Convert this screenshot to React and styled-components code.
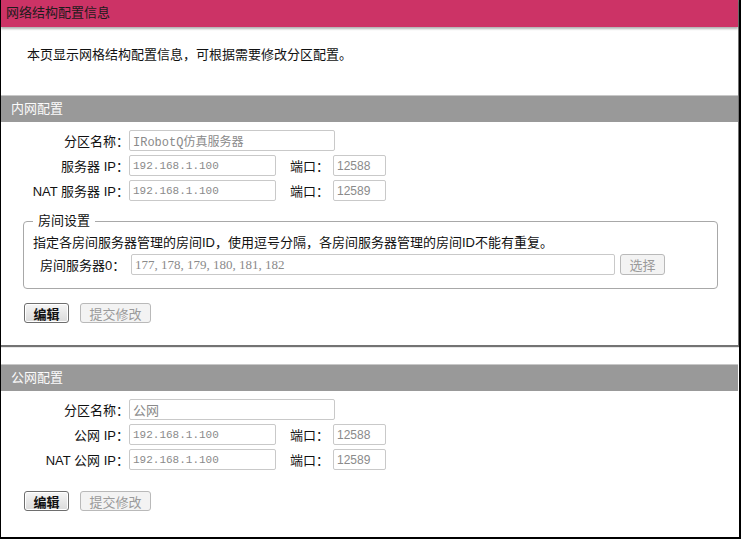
import React from 'react';
import styled, { createGlobalStyle } from 'styled-components';

const FONT = `"Liberation Sans", "Noto Sans CJK SC", sans-serif`;
const MONO = `"Liberation Mono", "Noto Sans CJK SC", monospace`;
const SERIF = `"Liberation Serif", "Noto Sans CJK SC", serif`;

const GlobalStyle = createGlobalStyle`
  html, body {
    margin: 0;
    padding: 0;
    background: #fff;
  }
  * {
    box-sizing: border-box;
  }
`;

const sections = [
  {
    title: '内网配置',
    name: 'IRobotQ仿真服务器',
    nameMono: true,
    ipLabel: '服务器 IP：',
    natLabel: 'NAT 服务器 IP：',
    ip: '192.168.1.100',
    port: '12588',
    natIp: '192.168.1.100',
    natPort: '12589',
    rooms: true,
  },
  {
    title: '公网配置',
    name: '公网',
    nameMono: false,
    ipLabel: '公网 IP：',
    natLabel: 'NAT 公网 IP：',
    ip: '192.168.1.100',
    port: '12588',
    natIp: '192.168.1.100',
    natPort: '12589',
    rooms: false,
  },
];

const App = () => {
  return (
    <Frame>
      <GlobalStyle />
      <TopPanel>
        <TitleBar>网络结构配置信息</TitleBar>
        <Intro>本页显示网格结构配置信息，可根据需要修改分区配置。</Intro>
        <ConfigSection {...sections[0]} />
      </TopPanel>
      <BottomPanel>
        <ConfigSection {...sections[1]} />
      </BottomPanel>
    </Frame>
  );
};

const ConfigSection = ({
  title,
  name,
  nameMono,
  ipLabel,
  natLabel,
  ip,
  port,
  natIp,
  natPort,
  rooms,
}) => (
  <>
    <SectionBar>{title}</SectionBar>
    <SectionBody>
      <Row>
        <Label>分区名称：</Label>
        <Field width={206} $font={nameMono ? MONO : FONT} $size={nameMono ? 12 : 13}>
          {name}
        </Field>
      </Row>
      <Row>
        <Label>{ipLabel}</Label>
        <Field width={147} $font={MONO} $size={11}>{ip}</Field>
        <PortLabel>端口：</PortLabel>
        <Field width={53} $font={FONT} $size={12}>{port}</Field>
      </Row>
      <Row>
        <Label>{natLabel}</Label>
        <Field width={147} $font={MONO} $size={11}>{natIp}</Field>
        <PortLabel>端口：</PortLabel>
        <Field width={53} $font={FONT} $size={12}>{natPort}</Field>
      </Row>

      {rooms && (
        <RoomSet>
          <Legend>房间设置</Legend>
          <Hint>指定各房间服务器管理的房间ID，使用逗号分隔，各房间服务器管理的房间ID不能有重复。</Hint>
          <RoomRow>
            <RoomLabel>房间服务器0：</RoomLabel>
            <Field width={484} $font={SERIF} $size={13}>
              177, 178, 179, 180, 181, 182
            </Field>
            <Button $disabled $width={45} $height={21}>选择</Button>
          </RoomRow>
        </RoomSet>
      )}

      <Actions $rooms={rooms}>
        <Button $width={45}>编辑</Button>
        <Button $disabled $width={71}>提交修改</Button>
      </Actions>
    </SectionBody>
  </>
);

const Frame = styled.div`
  width: 741px;
  height: 539px;
  overflow: hidden;
  border-left: 1px solid #000;
  border-right: 2px solid #000;
  border-bottom: 2px solid #000;
  background: #fff;
  font-family: ${FONT};
  font-size: 13px;
  color: #111;
`;

const TopPanel = styled.div`
  margin-right: 1px;
  background: #fff;
  box-shadow: 1px 1px 1px 1px rgba(0, 0, 0, 0.55);
  padding-bottom: 22px;
`;

const BottomPanel = styled.div`
  margin-top: 19px;
  margin-right: 1px;
`;

const TitleBar = styled.div`
  height: 27px;
  line-height: 26px;
  padding-left: 5px;
  background: #cc3366;
  color: #1c1c1c;
  font-size: 13px;
  box-shadow: 0 2px 2px rgba(0, 0, 0, 0.3);
  position: relative;
`;

const Intro = styled.div`
  height: 68px;
  padding: 19px 0 0 26px;
  line-height: 18px;
  color: #111;
`;

const SectionBar = styled.div`
  height: 27px;
  line-height: 26px;
  padding-left: 10px;
  background: #999999;
  border-top: 1px solid #c8c8c8;
  color: #fbfbfb;
  font-size: 13px;
`;

const SectionBody = styled.div`
  padding-top: 8px;
`;

const Row = styled.div`
  display: flex;
  align-items: center;
  height: 21px;
  margin-bottom: 4px;
`;

const Label = styled.span`
  width: 128px;
  flex-shrink: 0;
  text-align: right;
  white-space: nowrap;
  color: #111;
`;

const PortLabel = styled.span`
  margin-left: 14px;
  width: 43px;
  flex-shrink: 0;
  white-space: nowrap;
  color: #111;
`;

const Field = styled.div`
  width: ${(p) => p.width}px;
  height: 21px;
  flex-shrink: 0;
  padding: 0 3px;
  border: 1px solid #c9c9c9;
  border-radius: 2px;
  background: #fff;
  display: flex;
  align-items: center;
  white-space: nowrap;
  overflow: hidden;
  font-family: ${(p) => p.$font};
  font-size: ${(p) => p.$size}px;
  color: #8a8a8a;
`;

const RoomSet = styled.fieldset`
  margin: 12px 0 0 22px;
  width: 695px;
  padding: 0 9px 13px 9px;
  border: 1px solid #a8a8a8;
  border-radius: 4px;
`;

const Legend = styled.legend`
  padding: 0 5px;
  line-height: 16px;
  font-size: 13px;
  color: #111;
`;

const Hint = styled.div`
  margin-top: 5px;
  line-height: 17px;
  color: #111;
`;

const RoomRow = styled.div`
  display: flex;
  align-items: center;
  margin-top: 3px;
  padding-left: 7px;
`;

const RoomLabel = styled.span`
  width: 91px;
  flex-shrink: 0;
  white-space: nowrap;
  color: #111;
`;

const Actions = styled.div`
  display: flex;
  gap: 11px;
  margin: ${(p) => (p.$rooms ? '14px' : '21px')} 0 0 23px;
`;

const Button = styled.div`
  width: ${(p) => p.$width}px;
  height: ${(p) => p.$height || 20}px;
  margin-left: ${(p) => (p.$height ? '5px' : '0')};
  flex-shrink: 0;
  display: flex;
  align-items: center;
  justify-content: center;
  border-radius: 3px;
  font-size: 13px;
  border: 1px solid ${(p) => (p.$disabled ? '#b9b9b9' : '#6e6e6e')};
  background: ${(p) =>
    p.$disabled
      ? '#f3f3f3'
      : 'linear-gradient(#f6f6f6, #dadada)'};
  color: ${(p) => (p.$disabled ? '#9a9a9a' : '#111')};
  font-weight: ${(p) => (p.$disabled ? 400 : 700)};
  box-shadow: ${(p) => (p.$disabled ? 'none' : 'inset 0 0 0 1px #fff')};
`;

export default App;
